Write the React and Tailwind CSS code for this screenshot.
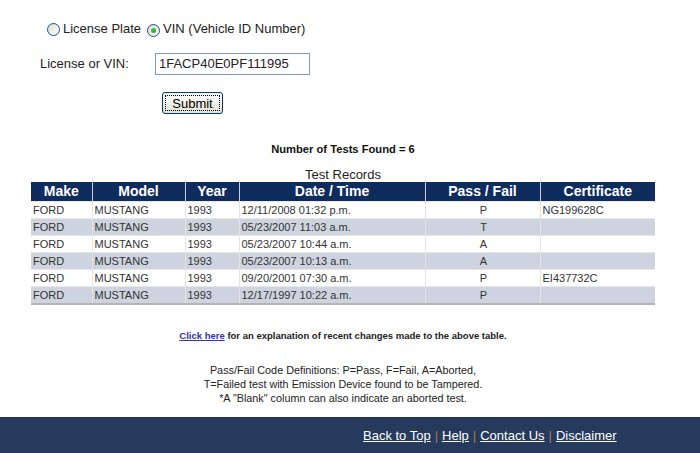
import React from "react";

const rows = [
  ["FORD", "MUSTANG", "1993", "12/11/2008 01:32 p.m.", "P", "NG199628C"],
  ["FORD", "MUSTANG", "1993", "05/23/2007 11:03 a.m.", "T", ""],
  ["FORD", "MUSTANG", "1993", "05/23/2007 10:44 a.m.", "A", ""],
  ["FORD", "MUSTANG", "1993", "05/23/2007 10:13 a.m.", "A", ""],
  ["FORD", "MUSTANG", "1993", "09/20/2001 07:30 a.m.", "P", "EI437732C"],
  ["FORD", "MUSTANG", "1993", "12/17/1997 10:22 a.m.", "P", ""],
];

const cols = [
  { name: "Make", w: "w-[61px]" },
  { name: "Model", w: "w-[93px]" },
  { name: "Year", w: "w-[54px]" },
  { name: "Date / Time", w: "w-[186px]" },
  { name: "Pass / Fail", w: "w-[115px]" },
  { name: "Certificate", w: "w-[115px]" },
];

const Radio = ({ checked }) => (
  <span className="relative inline-flex w-[13px] h-[13px] rounded-full border border-[#1c5180] bg-gradient-to-br from-[#dcdcd7] to-white items-center justify-center">
    {checked && <span className="w-[5px] h-[5px] rounded-full bg-gradient-to-br from-[#55d551] to-[#219521]" />}
  </span>
);

export default function App() {
  return (
    <div className="w-[700px] h-[453px] bg-white flex flex-col font-['Liberation_Sans',Arial,sans-serif] text-[#222]">
      {/* search form */}
      <div className="flex items-center pl-[47px] pt-[21px] text-[13px] leading-4">
        <Radio />
        <span className="ml-[3px]">License Plate</span>
        <span className="ml-[6px]"><Radio checked /></span>
        <span className="ml-[3px]">VIN (Vehicle ID Number)</span>
      </div>

      <div className="flex items-center mt-[16px] text-[13px]">
        <span className="pl-[40px] w-[155px]">License or VIN:</span>
        <div className="w-[155px] h-[22px] border border-[#7f9db9] flex items-center px-[3px] text-[13px] text-[#222]">
          1FACP40E0PF111995
        </div>
      </div>

      <div className="pl-[162px] mt-[16px]">
        <button className="w-[61px] h-[22px] rounded-[3px] border border-[#003c74] bg-gradient-to-b from-white to-[#e3e1d6] p-[2px] text-[13px] text-black">
          <span className="block w-full h-full border border-dotted border-black leading-[16px]">Submit</span>
        </button>
      </div>

      {/* results */}
      <div className="ml-[31px] w-[624px] mt-[27px] text-center font-bold text-[11.2px] leading-[14px] text-[#111]">
        Number of Tests Found = 6
      </div>
      <div className="ml-[31px] w-[624px] mt-[11px] text-center text-[13px] leading-[15px] text-[#222]">
        Test Records
      </div>

      <table className="ml-[31px] w-[624px] border-collapse table-fixed border-b-2 border-[#b4b4b4]">
        <thead>
          <tr className="bg-[#0f2c5e] h-[19px]">
            {cols.map((c, i) => (
              <th
                key={c.name}
                className={`${c.w} p-0 text-white font-bold text-[14px] leading-[18px] ${i > 0 ? "border-l border-[#c9cfdb]" : ""}`}
              >
                {c.name}
              </th>
            ))}
          </tr>
        </thead>
        <tbody>
          {rows.map((r, ri) => (
            <tr key={ri} className={`h-[17px] ${ri % 2 === 1 ? "bg-[#cdd4df]" : "bg-white"}`}>
              {r.map((v, ci) => (
                <td
                  key={ci}
                  className={`p-0 pl-[2px] text-[11px] leading-[16px] text-[#333] whitespace-nowrap border-t border-[#e8e8e8] ${ci > 0 ? "border-l border-l-[#e4e4e4]" : ""} ${ci === 4 ? "text-center pl-0" : "text-left"}`}
                >
                  {v}
                </td>
              ))}
            </tr>
          ))}
        </tbody>
      </table>

      <div className="ml-[31px] w-[624px] mt-[25px] text-center text-[9.5px] font-bold leading-[12px] text-[#222]">
        <a href="#" className="text-[#3333aa] underline">Click here</a> for an explanation of recent changes made to the above table.
      </div>

      <div className="ml-[31px] w-[624px] mt-[21px] text-center text-[10.8px] leading-[14px] text-[#222]">
        <div>Pass/Fail Code Definitions: P=Pass, F=Fail, A=Aborted,</div>
        <div>T=Failed test with Emission Device found to be Tampered.</div>
        <div>*A "Blank" column can also indicate an aborted test.</div>
      </div>

      {/* footer */}
      <div className="mt-auto h-[36px] bg-[#253a5c] border-t border-[#1e3050] flex items-center pl-[363px] text-[13px] text-white">
        <a href="#" className="underline">Back to Top</a>
        <span className="mx-[4px] text-[#b07a4e]">|</span>
        <a href="#" className="underline">Help</a>
        <span className="mx-[4px] text-[#b07a4e]">|</span>
        <a href="#" className="underline">Contact Us</a>
        <span className="mx-[4px] text-[#b07a4e]">|</span>
        <a href="#" className="underline">Disclaimer</a>
      </div>
    </div>
  );
}
